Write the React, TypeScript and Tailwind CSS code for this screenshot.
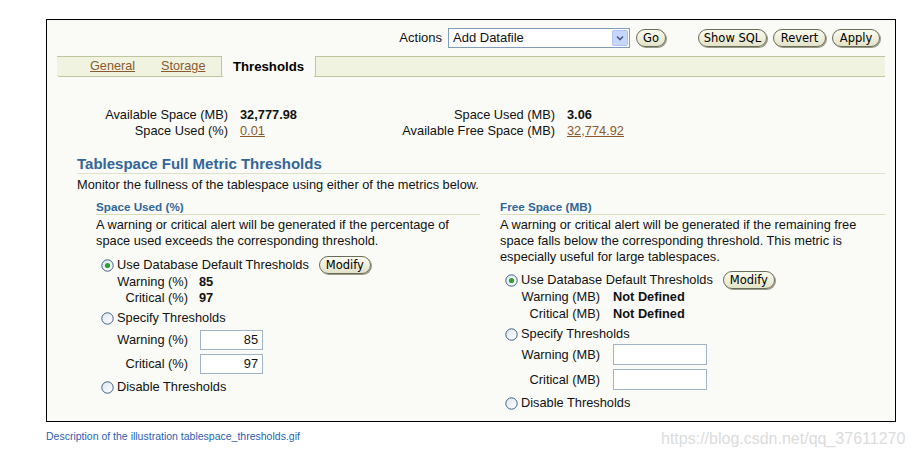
import React from "react";

const pill =
  "h-[18px] rounded-[9px] border border-[#6b6b5a] bg-gradient-to-b from-[#fbfbef] to-[#e3e3c9] shadow-[1px_1px_0_#9a9a88] text-[11.5px] leading-[16px] text-black font-['DejaVu_Sans',sans-serif] flex items-center justify-center";

function Radio({ checked }: { checked?: boolean }) {
  return (
    <svg width="13" height="13" viewBox="0 0 13 13" className="shrink-0">
      <defs>
        <linearGradient id={checked ? "rg1" : "rg0"} x1="0" y1="0" x2="1" y2="1">
          <stop offset="0" stopColor="#dfe6ee" />
          <stop offset="1" stopColor="#ffffff" />
        </linearGradient>
      </defs>
      <circle cx="6.5" cy="6.5" r="5.7" fill={`url(#${checked ? "rg1" : "rg0"})`} stroke="#3c5f86" strokeWidth="1" />
      {checked && <circle cx="6.5" cy="6.5" r="2.6" fill="#2ea12e" />}
    </svg>
  );
}

function Btn({ w, children }: { w: string; children: React.ReactNode }) {
  return <div className={`${pill} ${w}`}>{children}</div>;
}

export default function App() {
  return (
    <div className="relative w-[913px] h-[460px] bg-white overflow-hidden font-['Liberation_Sans',Arial,sans-serif] text-[12.8px] text-[#111]">
      <div className="ml-[46px] mt-[19px] w-[850px] h-[403px] border border-black bg-[#fafbf7]">
        {/* toolbar */}
        <div className="h-[36px] flex items-center justify-end pr-[15px]">
          <span className="text-[13px] mr-[6px]">Actions</span>
          <div className="w-[182px] h-[20px] border border-[#7f9db9] bg-white flex items-center justify-between pl-[4px] pr-[1px]">
            <span className="text-[13px]">Add Datafile</span>
            <div className="w-[16px] h-[16px] rounded-[2px] bg-[#c7d6fb] border border-[#b0c4ef] flex items-center justify-center">
              <svg width="8" height="6" viewBox="0 0 8 6">
                <path d="M1 1.5 L4 4.5 L7 1.5" fill="none" stroke="#4a5c85" strokeWidth="1.6" />
              </svg>
            </div>
          </div>
          <Btn w="w-[30px] ml-[6px]">Go</Btn>
          <Btn w="w-[69px] ml-[32px]">Show SQL</Btn>
          <Btn w="w-[53px] ml-[6px]">Revert</Btn>
          <Btn w="w-[48px] ml-[6px]">Apply</Btn>
        </div>

        {/* tabs */}
        <div className="mx-[10px] h-[21px] border-y border-[#bfc59f] bg-[#f1f3e1] flex items-stretch rounded-bl-[3px]">
          <div className="ml-[33px] w-[71px] flex items-center">
            <span className="underline text-[#8a5a2e] text-[12.7px]">General</span>
          </div>
          <div className="w-[60px] flex items-center">
            <span className="underline text-[#8a5a2e] text-[12.7px]">Storage</span>
          </div>
          <div className="w-[95px] -mt-px -mb-px bg-[#fafbf7] border-x border-[#bfc59f] rounded-b-[3px] flex items-center justify-center">
            <span className="font-bold text-[13.2px] text-black">Thresholds</span>
          </div>
        </div>

        {/* summary */}
        <div className="mt-[30px] flex leading-[16px]">
          <div className="grid grid-cols-[181px_127px]">
            <span className="text-right">Available Space (MB)</span>
            <span className="pl-[12px] font-bold">32,777.98</span>
            <span className="text-right">Space Used (%)</span>
            <span className="pl-[12px]">
              <span className="underline text-[#8a5a2e]">0.01</span>
            </span>
          </div>
          <div className="grid grid-cols-[200px_auto]">
            <span className="text-right">Space Used (MB)</span>
            <span className="pl-[12px] font-bold">3.06</span>
            <span className="text-right">Available Free Space (MB)</span>
            <span className="pl-[12px]">
              <span className="underline text-[#8a5a2e]">32,774.92</span>
            </span>
          </div>
        </div>

        {/* metric thresholds */}
        <div className="ml-[30px] mr-[10px] mt-[16px] text-[15px] font-bold text-[#336699] leading-[18px] border-b border-[#dde2c9]">
          Tablespace Full Metric Thresholds
        </div>
        <div className="ml-[30px] mt-[3px] leading-[16px]">
          Monitor the fullness of the tablespace using either of the metrics below.
        </div>

        <div className="ml-[49px] mt-[7px] flex gap-[20px]">
          {/* space used */}
          <div className="w-[384px]">
            <div className="text-[11.7px] font-bold text-[#336699] leading-[14px] border-b border-[#d6dcbc]">Space Used (%)</div>
            <div className="mt-[2px] leading-[16px]">
              A warning or critical alert will be generated if the percentage of
              <br />
              space used exceeds the corresponding threshold.
            </div>
            <div className="mt-[7px] h-[18px] flex items-center pl-[5px]">
              <Radio checked />
              <span className="ml-[3px]">Use Database Default Thresholds</span>
              <Btn w="w-[52px] ml-[10px]">Modify</Btn>
            </div>
            <div className="leading-[16px] pl-[18px]">
              <div className="flex">
                <span className="w-[74px] text-right">Warning (%)</span>
                <span className="ml-[11px] font-bold">85</span>
              </div>
              <div className="flex">
                <span className="w-[74px] text-right">Critical (%)</span>
                <span className="ml-[11px] font-bold">97</span>
              </div>
            </div>
            <div className="mt-[4px] h-[16px] flex items-center pl-[5px]">
              <Radio />
              <span className="ml-[3px]">Specify Thresholds</span>
            </div>
            <div className="mt-[4px] h-[20px] flex items-center pl-[18px]">
              <span className="w-[74px] text-right">Warning (%)</span>
              <div className="ml-[12px] w-[63px] h-[20px] border border-[#9fb3c9] bg-white text-right pr-[4px] leading-[18px]">85</div>
            </div>
            <div className="mt-[4px] h-[20px] flex items-center pl-[18px]">
              <span className="w-[74px] text-right">Critical (%)</span>
              <div className="ml-[12px] w-[63px] h-[20px] border border-[#9fb3c9] bg-white text-right pr-[4px] leading-[18px]">97</div>
            </div>
            <div className="mt-[5px] h-[16px] flex items-center pl-[5px]">
              <Radio />
              <span className="ml-[3px]">Disable Thresholds</span>
            </div>
          </div>

          {/* free space */}
          <div className="w-[385px]">
            <div className="text-[11.7px] font-bold text-[#336699] leading-[14px] border-b border-[#d6dcbc]">Free Space (MB)</div>
            <div className="mt-[2px] leading-[16px]">
              A warning or critical alert will be generated if the remaining free
              <br />
              space falls below the corresponding threshold. This metric is
              <br />
              especially useful for large tablespaces.
            </div>
            <div className="mt-[6px] h-[18px] flex items-center pl-[5px]">
              <Radio checked />
              <span className="ml-[3px]">Use Database Default Thresholds</span>
              <Btn w="w-[52px] ml-[10px]">Modify</Btn>
            </div>
            <div className="leading-[16.5px] pl-[20px]">
              <div className="flex">
                <span className="w-[80px] text-right">Warning (MB)</span>
                <span className="ml-[13px] font-bold">Not Defined</span>
              </div>
              <div className="flex">
                <span className="w-[80px] text-right">Critical (MB)</span>
                <span className="ml-[13px] font-bold">Not Defined</span>
              </div>
            </div>
            <div className="mt-[4px] h-[16px] flex items-center pl-[5px]">
              <Radio />
              <span className="ml-[3px]">Specify Thresholds</span>
            </div>
            <div className="mt-[2px] h-[21px] flex items-center pl-[20px]">
              <span className="w-[80px] text-right">Warning (MB)</span>
              <div className="ml-[13px] w-[94px] h-[21px] border border-[#9fb3c9] bg-white" />
            </div>
            <div className="mt-[4px] h-[21px] flex items-center pl-[20px]">
              <span className="w-[80px] text-right">Critical (MB)</span>
              <div className="ml-[13px] w-[94px] h-[21px] border border-[#9fb3c9] bg-white" />
            </div>
            <div className="mt-[5px] h-[16px] flex items-center pl-[5px]">
              <Radio />
              <span className="ml-[3px]">Disable Thresholds</span>
            </div>
          </div>
        </div>
      </div>

      <div className="ml-[46px] mt-[7px] text-[10.5px] leading-[14px] text-[#2b5fb3]">
        Description of the illustration tablespace_thresholds.gif
      </div>

      <div className="absolute left-[661px] top-[429px] text-[16px] leading-[20px] text-[#dcdcdc] font-['Liberation_Sans',Arial,sans-serif]">
        https://blog.csdn.net/qq_37611270
      </div>
    </div>
  );
}
